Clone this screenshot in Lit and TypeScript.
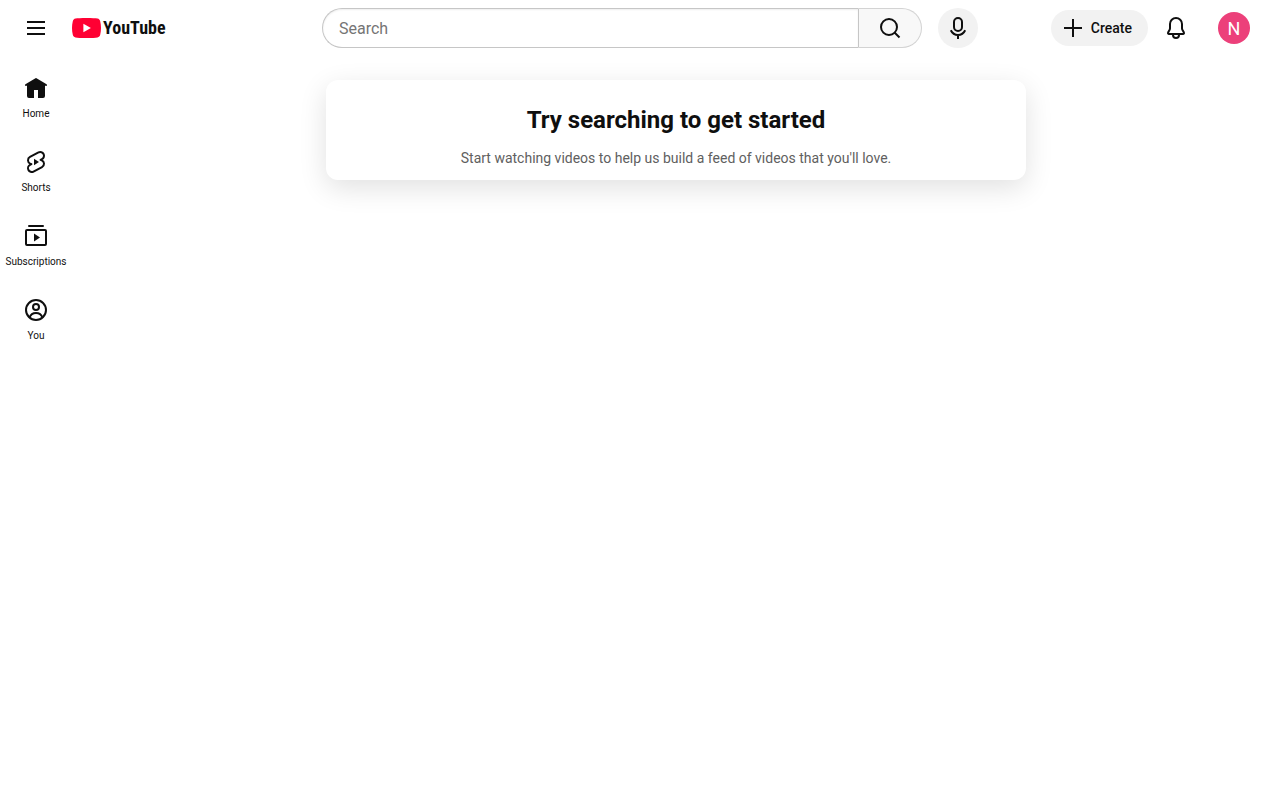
import { LitElement, html, css, svg } from "lit";
import { customElement } from "lit/decorators.js";

const line = (body: unknown) => html`
  <svg class="icon" viewBox="0 0 24 24" width="24" height="24" fill="none" stroke="currentColor"
    stroke-width="2" stroke-linejoin="round" aria-hidden="true">${body}</svg>`;

const icons = {
  menu: line(svg`<path d="M3 6h18M3 12h18M3 18h18"/>`),
  search: line(svg`<circle cx="11" cy="11" r="8"/><path d="M16.500 16.500l5 5"/>`),
  mic: line(svg`<rect x="8" y="2" width="8" height="13" rx="4"/><path d="M4.800 14.300C6.100 17 8.800 19 12 19s5.900-2 7.200-4.700M12 19v4"/>`),
  plus: line(svg`<path d="M12 3v18M3 12h18"/>`),
  bell: line(svg`<path d="M12 2a6 6 0 0 0-6 6v4.200c0 .5-.15 1-.4 1.500L4.100 16.500c-.4.700.1 1.500.9 1.500h14c.8 0 1.300-.8.9-1.500l-1.500-2.800c-.25-.5-.4-1-.4-1.500V8a6 6 0 0 0-6-6z"/><path d="M9 18v1a3 3 0 0 0 6 0v-1"/>`),
  home: line(svg`<path fill="currentColor" stroke="none" d="m11.485 2.143-8 4.800-2 1.200a1 1 0 0 0 1.030 1.714L3 9.567V20a2 2 0 0 0 2 2h5v-8h4v8h5a2 2 0 0 0 2-2V9.567l.485.290a1 1 0 0 0 1.030-1.714l-2-1.200-8-4.800a1 1 0 0 0-1.030 0Z"/>`),
  shorts: line(svg`<path d="M17.770 10.320l-1.200-.5L18 9.060c1.840-.96 2.530-3.230 1.560-5.060s-3.240-2.530-5.070-1.560L6 6.940c-1.290.68-2.070 2.040-2 3.490.07 1.420.93 2.670 2.220 3.250l1.200.5L6 14.930c-1.830.97-2.530 3.240-1.560 5.070.97 1.830 3.240 2.530 5.070 1.560l8.500-4.500c1.290-.68 2.060-2.040 1.990-3.490-.07-1.420-.94-2.680-2.230-3.250z"/><path fill="currentColor" stroke="none" d="M10 8.800v6.400l5-3.200z"/>`),
  subscriptions: line(svg`<path stroke-linecap="round" d="M5 2h14"/><rect x="2" y="6" width="20" height="15" rx="1"/><path fill="currentColor" stroke="none" d="M10 9.500v8l6-4z"/>`),
  you: line(svg`<circle cx="12" cy="12" r="10"/><circle cx="12" cy="9" r="3"/><path d="M5.500 19.500C6.600 16.500 9 15 12 15s5.400 1.500 6.500 4.500"/>`),
};

@customElement("app-masthead")
class AppMasthead extends LitElement {
  static styles = css`
    :host { display: flex; align-items: center; justify-content: space-between; height: 56px; padding: 0 16px; box-sizing: border-box; }
    button { border: 0; background: none; color: inherit; font: inherit; padding: 0; cursor: pointer; display: flex; align-items: center; justify-content: center; flex: none; }
    .icon, .mark { display: block; flex: none; }
    .round { width: 40px; height: 40px; border-radius: 50%; }
    .tinted { background: #f2f2f2; }
    .start { display: flex; align-items: center; width: 169px; flex: none; }
    .logo { display: flex; align-items: center; gap: 2px; margin-left: 16px; color: #0f0f0f; text-decoration: none; }
    .wordmark { font: 700 18px/24px "Roboto Condensed", Roboto, "Liberation Sans Narrow", sans-serif; }
    .center { display: flex; align-items: center; justify-content: flex-end; gap: 16px; flex: 0 1 732px; min-width: 0; }
    .search { display: flex; flex: 0 1 600px; height: 40px; min-width: 0; }
    .field { flex: 1; min-width: 0; box-sizing: border-box; border: 1px solid #c6c6c6; border-right: 0; border-radius: 20px 0 0 20px; padding: 2px 4px 0 16px; font: 400 16px/24px Roboto, sans-serif; color: #0f0f0f; background: #fff; box-shadow: inset 0 1px 2px #eee; outline: 0; }
    .field::placeholder { color: #757575; opacity: 1; }
    .go { width: 64px; box-sizing: border-box; border: 1px solid #d3d3d3; border-left-color: #c6c6c6; border-radius: 0 20px 20px 0; background: #f8f8f8; }
    .end { display: flex; align-items: center; justify-content: flex-end; min-width: 225px; flex: none; }
    .create { gap: 6px; height: 36px; padding: 0 16px 0 10px; border-radius: 18px; margin-right: 8px; font: 500 14px/36px Roboto, sans-serif; }
    .avatar { width: 32px; height: 32px; border-radius: 50%; margin: 0 14px 0 22px; background: #ec407a; color: #fff; font-size: 18px; }
  `;

  render() {
    return html`
      <div class="start">
        <button class="round" aria-label="Guide">${icons.menu}</button>
        <a class="logo" href="#" aria-label="YouTube Home">
          <svg class="mark" viewBox="0 0 29 20" width="29" height="20" aria-hidden="true">
            <path fill="#f03" d="M14.500 0C20 0 23.500.2 25.500.6c1.400.3 2.400 1.200 2.700 2.600C28.700 5.200 29 7.500 29 10s-.3 4.800-.8 6.800c-.3 1.400-1.300 2.300-2.700 2.600-2 .4-5.500.6-11 .6s-9-.2-11-.6C2.100 19.100 1.100 18.200.8 16.800.3 14.800 0 12.500 0 10s.3-4.800.8-6.800C1.100 1.800 2.100.9 3.500.6 5.500.2 9 0 14.500 0z"/>
            <path fill="#fff" d="M11.400 5.700v8.600l7.500-4.300z"/>
          </svg>
          <span class="wordmark">YouTube</span>
        </a>
      </div>
      <div class="center">
        <form class="search" role="search" @submit=${(e: Event) => e.preventDefault()}>
          <input class="field" type="text" placeholder="Search" aria-label="Search" />
          <button class="go" aria-label="Search">${icons.search}</button>
        </form>
        <button class="round tinted" aria-label="Search with your voice">${icons.mic}</button>
      </div>
      <div class="end">
        <button class="create tinted">${icons.plus}<span>Create</span></button>
        <button class="round" aria-label="Notifications">${icons.bell}</button>
        <button class="avatar" aria-label="Account menu">N</button>
      </div>`;
  }
}

@customElement("app-guide")
class AppGuide extends LitElement {
  static styles = css`
    :host { display: block; width: 72px; flex: none; padding: 4px 4px 0; box-sizing: border-box; }
    .nav { display: flex; flex-direction: column; }
    .item { display: flex; flex-direction: column; align-items: center; gap: 7px; padding: 16px 0 13px; border-radius: 10px; color: #0f0f0f; text-decoration: none; font-size: 10px; line-height: 14px; }
    .icon { display: block; }
  `;

  private items = [
    { label: "Home", icon: icons.home },
    { label: "Shorts", icon: icons.shorts },
    { label: "Subscriptions", icon: icons.subscriptions },
    { label: "You", icon: icons.you },
  ];

  render() {
    return html`<nav class="nav">
      ${this.items.map((i) => html`<a class="item" href="#">${i.icon}<span>${i.label}</span></a>`)}
    </nav>`;
  }
}

@customElement("app-root")
class AppRoot extends LitElement {
  static styles = css`
    :host { display: block; min-height: 100vh; background: #fff; color: #0f0f0f; font-family: Roboto, "Liberation Sans", sans-serif; }
    .body { display: flex; }
    .main { flex: 1; min-width: 0; padding: 24px; display: flex; justify-content: center; align-items: flex-start; }
    .card { flex: 0 1 700px; box-sizing: border-box; padding: 24px 24px 12px; border-radius: 12px; text-align: center; background: #fff; box-shadow: 0 8px 28px rgba(0, 0, 0, 0.12); }
    .title { margin: 0 0 12px; font-size: 24px; line-height: 32px; font-weight: 700; }
    .text { margin: 0; font-size: 14px; line-height: 20px; color: #606060; }
  `;

  render() {
    return html`
      <app-masthead></app-masthead>
      <div class="body">
        <app-guide></app-guide>
        <main class="main">
          <section class="card">
            <h1 class="title">Try searching to get started</h1>
            <p class="text">Start watching videos to help us build a feed of videos that you'll love.</p>
          </section>
        </main>
      </div>`;
  }
}
